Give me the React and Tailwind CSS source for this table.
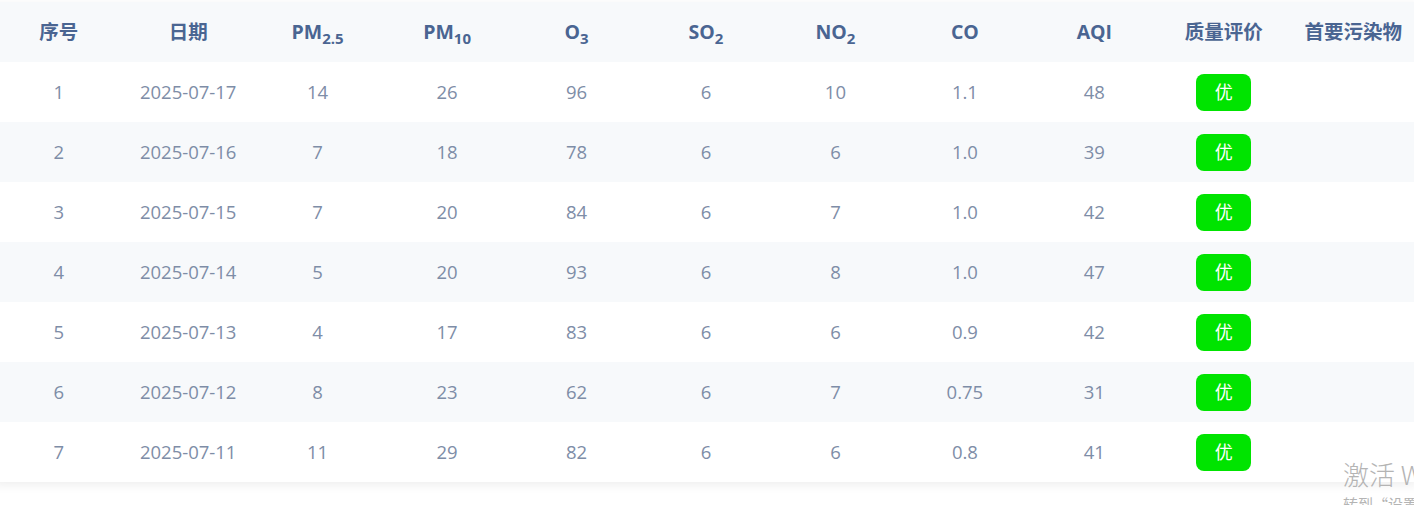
import React from "react";

const rows = [
  [1, "2025-07-17", 14, 26, 96, 6, 10, "1.1", 48],
  [2, "2025-07-16", 7, 18, 78, 6, 6, "1.0", 39],
  [3, "2025-07-15", 7, 20, 84, 6, 7, "1.0", 42],
  [4, "2025-07-14", 5, 20, 93, 6, 8, "1.0", 47],
  [5, "2025-07-13", 4, 17, 83, 6, 6, "0.9", 42],
  [6, "2025-07-12", 8, 23, 62, 6, 7, "0.75", 31],
  [7, "2025-07-11", 11, 29, 82, 6, 6, "0.8", 41],
];

const Sub = ({ children }) => (
  <sub className="text-[15px] relative top-[5px] align-baseline leading-none">{children}</sub>
);

const headers = [
  "序号",
  "日期",
  <>PM<Sub>2.5</Sub></>,
  <>PM<Sub>10</Sub></>,
  <>O<Sub>3</Sub></>,
  <>SO<Sub>2</Sub></>,
  <>NO<Sub>2</Sub></>,
  "CO",
  "AQI",
  "质量评价",
  "首要污染物",
];

const font = { fontFamily: '"Open Sans", "Noto Sans CJK SC", sans-serif' };

export default function App() {
  return (
    <div className="relative w-[1414px] h-[505px] overflow-hidden bg-white" style={font}>
      <div className="pt-[2px]">
        <div className="w-[1424px] -ml-[6px] bg-white shadow-[0_3px_10px_rgba(0,0,0,0.07)]">
          <div className="grid grid-cols-11 h-[60px] bg-[#f7f9fb] items-center text-[19.5px] font-bold text-[#4a6592]">
            {headers.map((h, i) => (
              <div key={i} className="text-center whitespace-nowrap">{h}</div>
            ))}
          </div>
          {rows.map((r, ri) => (
            <div
              key={ri}
              className={`grid grid-cols-11 h-[60px] items-center text-[18.5px] text-[#7e8da7] ${ri % 2 === 1 ? "bg-[#f7f9fb]" : "bg-white"}`}
            >
              {r.map((c, ci) => (
                <div key={ci} className="text-center">{c}</div>
              ))}
              <div className="flex justify-center">
                <span className="w-[55px] h-[37px] rounded-[8px] bg-[#00e400] text-white text-[18px] flex items-center justify-center">优</span>
              </div>
              <div></div>
            </div>
          ))}
        </div>
      </div>
      <div className="absolute left-[1343px] top-[461px] text-[#b4b4b4] whitespace-nowrap leading-none">
        <div className="text-[26px]" style={{ fontFamily: '"Noto Sans CJK SC", sans-serif', fontWeight: 300 }}>激活 Windows</div>
        <div className="text-[15px] mt-[9px]" style={{ fontFamily: '"Noto Sans CJK SC", sans-serif' }}>转到“设置”以激活 Windows。</div>
      </div>
    </div>
  );
}
